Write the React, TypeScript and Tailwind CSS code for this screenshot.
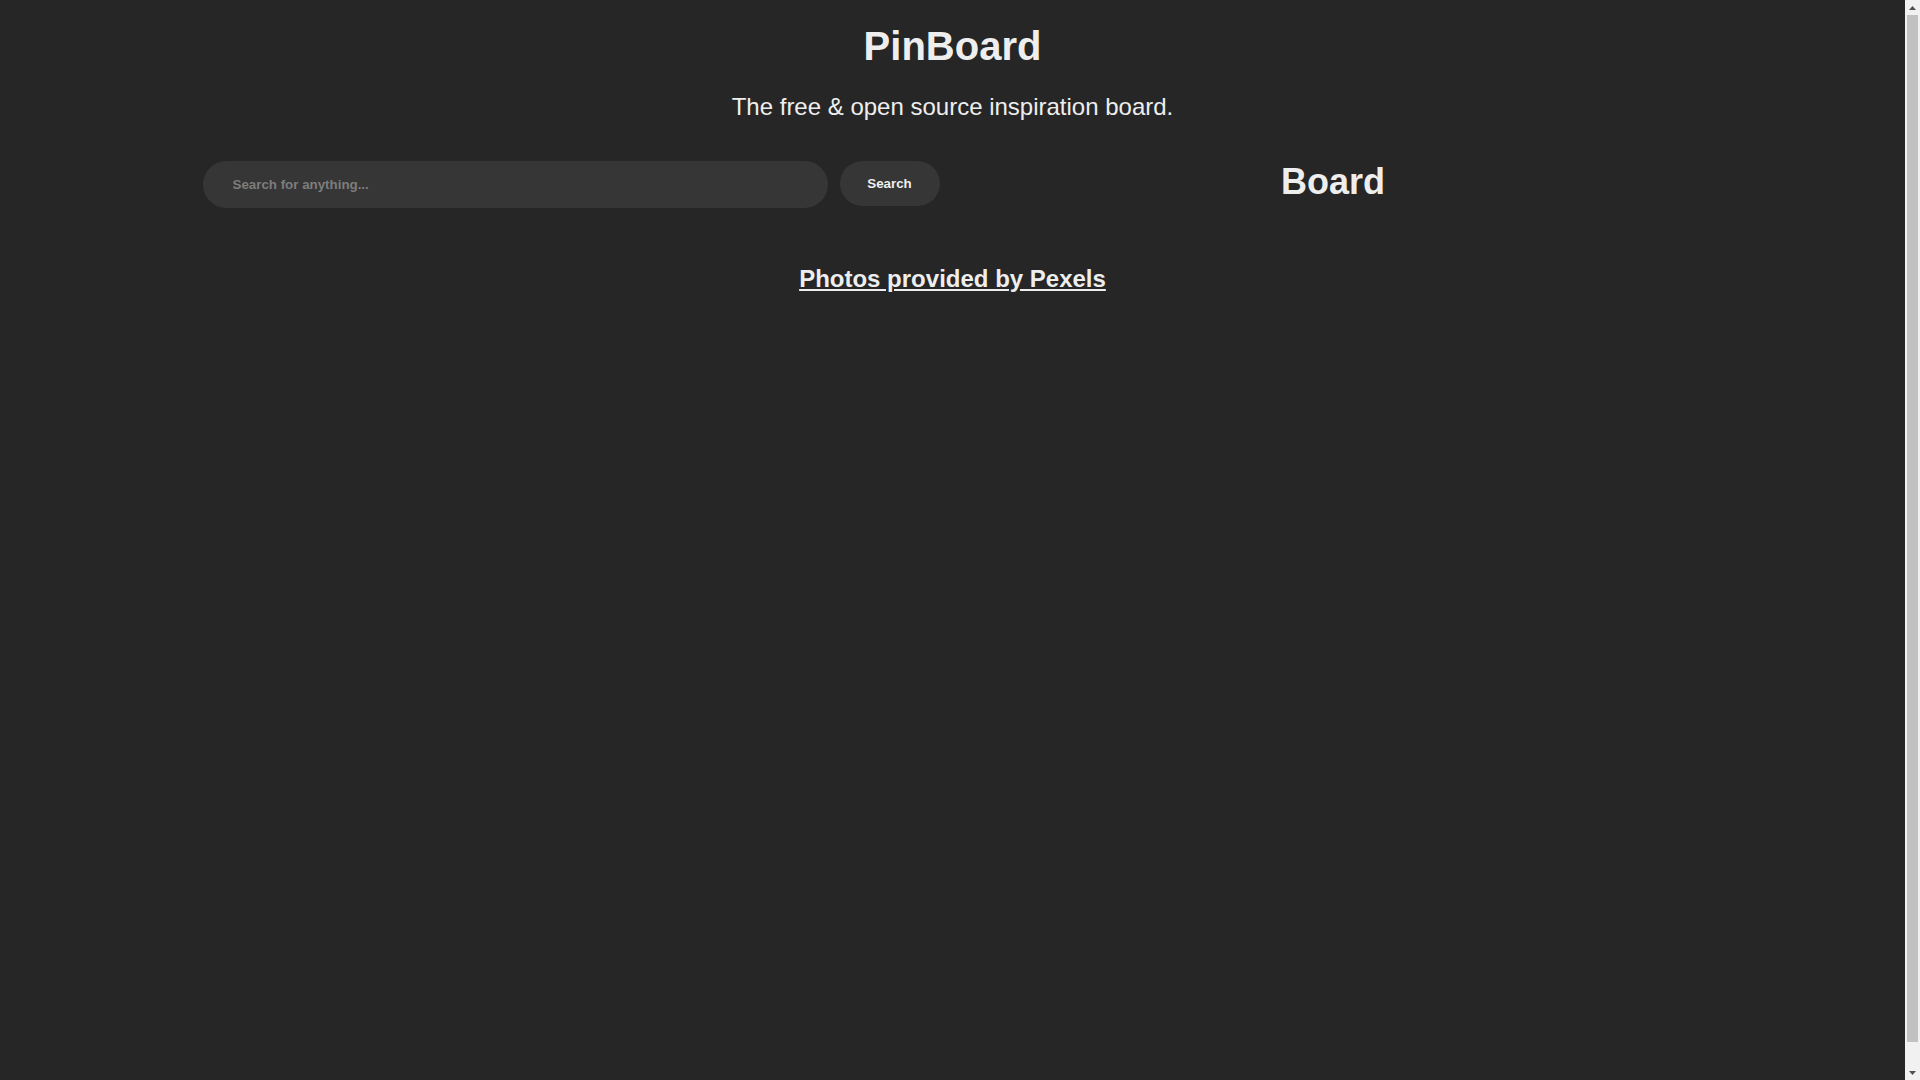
export default function App() {
  return (
    <div className="flex h-screen bg-[#262626] font-['Liberation_Sans',Arial,sans-serif] text-[#eeeeee]">
      <main className="min-w-0 flex-1">
        <header className="flex flex-col items-center">
          <h1 className="mt-[24px] text-[40px] leading-[45px] font-bold">PinBoard</h1>
          <p className="mt-[24px] text-[24px] leading-[28px]">
            The free &amp; open source inspiration board.
          </p>
        </header>

        <div className="mx-auto mt-[40px] flex w-[1500px] items-start">
          <form
            className="flex w-[761px] items-start gap-3"
            onSubmit={(e) => e.preventDefault()}
          >
            <input
              type="text"
              placeholder="Search for anything..."
              className="h-[47px] w-[625px] rounded-full bg-[#363636] px-[30px] text-[13.33px] font-bold text-[#eeeeee] outline-none placeholder:text-[#7d7d7d]"
            />
            <button
              type="submit"
              className="h-[45px] w-[100px] rounded-full bg-[#363636] text-[13.33px] font-bold text-[#eeeeee]"
            >
              Search
            </button>
          </form>
          <div className="flex flex-1 justify-center pt-[1px]">
            <h2 className="text-[36px] leading-[40px] font-bold">Board</h2>
          </div>
        </div>

        <div className="mt-[57px] flex justify-center">
          <a href="#" className="text-[24px] leading-[28px] font-bold underline">
            Photos provided by Pexels
          </a>
        </div>
      </main>

      {/* page scrollbar */}
      <div className="flex w-[15px] shrink-0 flex-col bg-[#f1f1f1]">
        <div className="flex h-[15px] items-center justify-center">
          <svg width="7" height="4" viewBox="0 0 7 4">
            <path d="M3.5 0 L7 4 L0 4 Z" fill="#505050" />
          </svg>
        </div>
        <div className="mx-[2px] h-[1027px] bg-[#c1c1c1]" />
        <div className="flex-1" />
        <div className="flex h-[15px] items-center justify-center">
          <svg width="7" height="4" viewBox="0 0 7 4">
            <path d="M0 0 L7 0 L3.5 4 Z" fill="#505050" />
          </svg>
        </div>
      </div>
    </div>
  );
}
